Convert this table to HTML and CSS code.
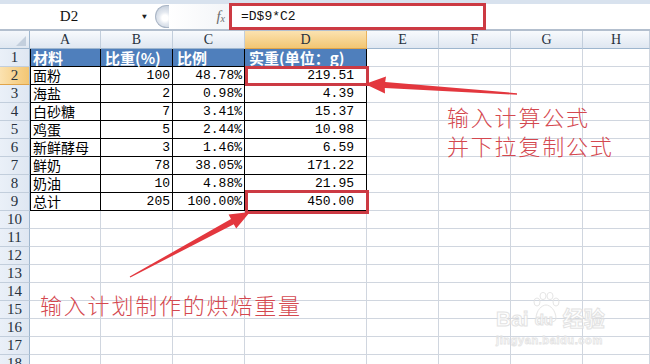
FILE: index.html
```html
<!DOCTYPE html>
<html lang="zh-CN">
<head>
<meta charset="utf-8">
<title>Excel</title>
<link rel="stylesheet" href="styles.css">
</head>
<body>
<div class="app">
  <div class="fbar">
    <div class="namebox"><span class="ref">D2</span><span class="dd">&#9660;</span></div>
    <div class="knob"></div>
    <div class="fx"><i>f</i><sub>x</sub></div>
    <div class="formula">=D$9*C2</div>
  </div>
  <div class="sheet">
    <div class="corner"></div><div class="ch">A</div><div class="ch">B</div><div class="ch">C</div><div class="ch sel">D</div><div class="ch">E</div><div class="ch">F</div><div class="ch">G</div><div class="ch">H</div>

    <div class="rh">1</div><div class="t a hd">材料</div><div class="t hd">比重(%)</div><div class="t hd">比例</div><div class="t hd">实重(单位：g)</div><div></div><div></div><div></div><div></div>
    <div class="rh sel">2</div><div class="t a tx">面粉</div><div class="t n">100</div><div class="t n">48.78%</div><div class="t n d">219.51</div><div></div><div></div><div></div><div></div>
    <div class="rh">3</div><div class="t a tx">海盐</div><div class="t n">2</div><div class="t n">0.98%</div><div class="t n d">4.39</div><div></div><div></div><div></div><div></div>
    <div class="rh">4</div><div class="t a tx">白砂糖</div><div class="t n">7</div><div class="t n">3.41%</div><div class="t n d">15.37</div><div></div><div></div><div></div><div></div>
    <div class="rh">5</div><div class="t a tx">鸡蛋</div><div class="t n">5</div><div class="t n">2.44%</div><div class="t n d">10.98</div><div></div><div></div><div></div><div></div>
    <div class="rh">6</div><div class="t a tx">新鲜酵母</div><div class="t n">3</div><div class="t n">1.46%</div><div class="t n d">6.59</div><div></div><div></div><div></div><div></div>
    <div class="rh">7</div><div class="t a tx">鲜奶</div><div class="t n">78</div><div class="t n">38.05%</div><div class="t n d">171.22</div><div></div><div></div><div></div><div></div>
    <div class="rh">8</div><div class="t a tx">奶油</div><div class="t n">10</div><div class="t n">4.88%</div><div class="t n d">21.95</div><div></div><div></div><div></div><div></div>
    <div class="rh">9</div><div class="t a tx">总计</div><div class="t n">205</div><div class="t n">100.00%</div><div class="t n d">450.00</div><div></div><div></div><div></div><div></div>
    <div class="rh">10</div><div></div><div></div><div></div><div></div><div></div><div></div><div></div><div></div>
    <div class="rh">11</div><div></div><div></div><div></div><div></div><div></div><div></div><div></div><div></div>
    <div class="rh">12</div><div></div><div></div><div></div><div></div><div></div><div></div><div></div><div></div>
    <div class="rh">13</div><div></div><div></div><div></div><div></div><div></div><div></div><div></div><div></div>
    <div class="rh">14</div><div></div><div></div><div></div><div></div><div></div><div></div><div></div><div></div>
    <div class="rh">15</div><div></div><div></div><div></div><div></div><div></div><div></div><div></div><div></div>
    <div class="rh">16</div><div></div><div></div><div></div><div></div><div></div><div></div><div></div><div></div>
    <div class="rh">17</div><div></div><div></div><div></div><div></div><div></div><div></div><div></div><div></div>
    <div class="rh">18</div><div></div><div></div><div></div><div></div><div></div><div></div><div></div><div></div>
  </div>

  <div class="box box-formula"></div>
  <div class="box box-d2"></div>
  <div class="box box-d9"></div>

  <svg class="arrows" width="650" height="364" viewBox="0 0 650 364">
    <polygon points="365,84 386,76.5 385.2,82 517,93.2 517,94.8 384.8,88 385,93.5" fill="#e3373e"/>
    <polygon points="250,212 228.6,214.6 231,219 129.7,276.5 130.3,277.5 233.8,224.2 236.2,228.6" fill="#e3373e"/>
  </svg>

  <div class="note note-top">输入计算公式<br>并下拉复制公式</div>
  <div class="note note-bottom">输入计划制作的烘焙重量</div>

  <div class="wm">
    <div class="wm-logo"><span>Bai</span><span class="paw"><svg width="28" height="34" viewBox="0 0 28 34"><ellipse cx="5" cy="10" rx="3" ry="4" fill="none" stroke="#e2e2e2"/><ellipse cx="11" cy="4" rx="3" ry="3.6" fill="none" stroke="#e2e2e2"/><ellipse cx="18" cy="4" rx="3" ry="3.6" fill="none" stroke="#e2e2e2"/><ellipse cx="24" cy="10" rx="3" ry="4" fill="none" stroke="#e2e2e2"/><path d="M4 27 C4 18 10 13 14 13 C18 13 24 18 24 27 C24 32 4 32 4 27 Z" fill="none" stroke="#e2e2e2"/></svg><span class="du">du</span></span><span>经验</span></div>
    <div class="wm-url">jingyan.baidu.com</div>
  </div>
</div>
</body>
</html>
```
FILE: styles.css
```css
* { box-sizing: border-box; margin: 0; padding: 0; }
html, body { width: 650px; height: 364px; overflow: hidden; background: #fff; }
body { font-family: "Liberation Mono", "Noto Sans CJK SC", monospace; color: #000; }
.app { position: relative; width: 650px; height: 364px; overflow: hidden; }

.fbar {
  display: flex;
  height: 31px;
  background: #fff;
  border-top: 4px solid #d8e2ee;
  border-bottom: 2px solid #b3bfce;
}
.namebox { width: 154px; display: flex; align-items: center; }
.ref { width: 138px; text-align: center; font-family: "Liberation Serif", serif; font-size: 15px; color: #111; }
.dd { font-size: 8px; color: #222; margin-left: 4px; }
.knob {
  width: 14px;
  margin: 1px 0 1px 1px;
  border: 1px solid #aab6c6;
  border-right: none;
  border-radius: 13px 0 0 13px;
  background: radial-gradient(circle at 9px 12px, #fff 0 3px, #e4e9f0 6px, #c9d2de 12px);
}
.fx {
  width: 60px;
  text-align: right;
  padding-right: 4px;
  padding-top: 4px;
  font-family: "Liberation Serif", serif;
  color: #6d6d6d;
  font-size: 15px;
  background: linear-gradient(to right, #fff, #f3f5f8);
}
.fx sub { font-size: 10px; font-style: italic; vertical-align: -1px; }
.formula { flex: 1; padding-left: 12px; font-size: 13px; line-height: 25px; color: #111; }

.sheet {
  display: grid;
  grid-template-columns: 30px 71px 72px 72px 122px 72px 72px 72px 67px;
  grid-auto-rows: 18px;
}
.sheet > div {
  border-right: 1px solid #d0d6df;
  border-bottom: 1px solid #d0d6df;
  font-size: 13px;
  line-height: 17px;
  white-space: nowrap;
}
.sheet > .corner {
  position: relative;
  background: linear-gradient(#f4f7fb, #dfe7f1);
  border-right-color: #9eb6ce;
  border-bottom-color: #9eb6ce;
}
.corner::after {
  content: "";
  position: absolute;
  right: 3px;
  bottom: 2px;
  border-left: 10px solid transparent;
  border-bottom: 10px solid #c3cfdd;
}
.sheet > .ch {
  background: linear-gradient(#f8fafd, #dfe7f1);
  border-right-color: #c2cedc;
  border-bottom-color: #9eb6ce;
  text-align: center;
  color: #27313d;
  font-family: "Liberation Serif", serif;
  font-size: 14px;
}
.sheet > .ch.sel {
  background: linear-gradient(#fbe2b0, #f3c673);
  border-right-color: #e9b25c;
  border-bottom-color: #e0a44a;
}
.sheet > .rh {
  background: linear-gradient(to right, #eaf0f8, #dfe7f2);
  border-right-color: #9eb6ce;
  border-bottom-color: #c2cedc;
  text-align: center;
  color: #27313d;
  font-family: "Liberation Serif", serif;
  font-size: 15px;
}
.sheet > .rh.sel {
  background: linear-gradient(to right, #fbe2b0, #f3c673);
  border-bottom-color: #e0a44a;
}
.sheet > .t { border-right-color: #000; border-bottom-color: #000; }
.sheet > .a { box-shadow: inset 1px 0 0 #000; }
.sheet > .hd {
  background: #4f7fbc;
  color: #fff;
  font-family: "Noto Sans CJK SC", sans-serif;
  font-weight: 700;
  font-size: 15px;
  padding-left: 4px;
}
.sheet > .a.hd { padding-left: 3px; }
.sheet > .tx {
  font-family: "Noto Sans CJK SC", sans-serif;
  font-size: 14px;
  padding-left: 3px;
}
.sheet > .n {
  text-align: right;
  padding-right: 2px;
  font-family: "Liberation Mono", monospace;
  font-size: 13px;
}
.sheet > .n.d { padding-right: 12px; }

.box { position: absolute; border: 3px solid #cc3a43; }
.box-formula { left: 229px; top: 3px; width: 257px; height: 27px; }
.box-d2 { left: 245px; top: 66px; width: 124px; height: 20px; }
.box-d9 { left: 245px; top: 190px; width: 124px; height: 24px; }

.arrows { position: absolute; left: 0; top: 0; }

.note {
  position: absolute;
  font-family: "Noto Sans CJK SC", sans-serif;
  font-weight: 300;
  font-size: 22px;
  letter-spacing: 1.8px;
  line-height: 29px;
  color: #d4484f;
}
.note-top { left: 447px; top: 102px; }
.note-bottom { left: 40px; top: 290px; }

.wm { position: absolute; left: 496px; top: 290px; width: 120px; opacity: 0.85; }
.wm-logo {
  display: flex;
  align-items: flex-end;
  font-family: "Liberation Sans", "Noto Sans CJK SC", sans-serif;
  font-weight: 700;
  font-size: 21px;
  line-height: 22px;
  color: #fff;
  -webkit-text-stroke: 1px #dedede;
}
.paw { position: relative; width: 30px; height: 40px; margin: 0 2px 0 2px; }
.paw svg { position: absolute; left: 1px; top: 2px; }
.paw .du { position: absolute; left: 4px; bottom: -1px; font-size: 15px; }
.wm-url {
  margin-top: 4px;
  font-family: "Liberation Sans", sans-serif;
  font-weight: 700;
  font-size: 11px;
  letter-spacing: 0.6px;
  color: #fff;
  -webkit-text-stroke: 0.8px #e0e0e0;
}
```
